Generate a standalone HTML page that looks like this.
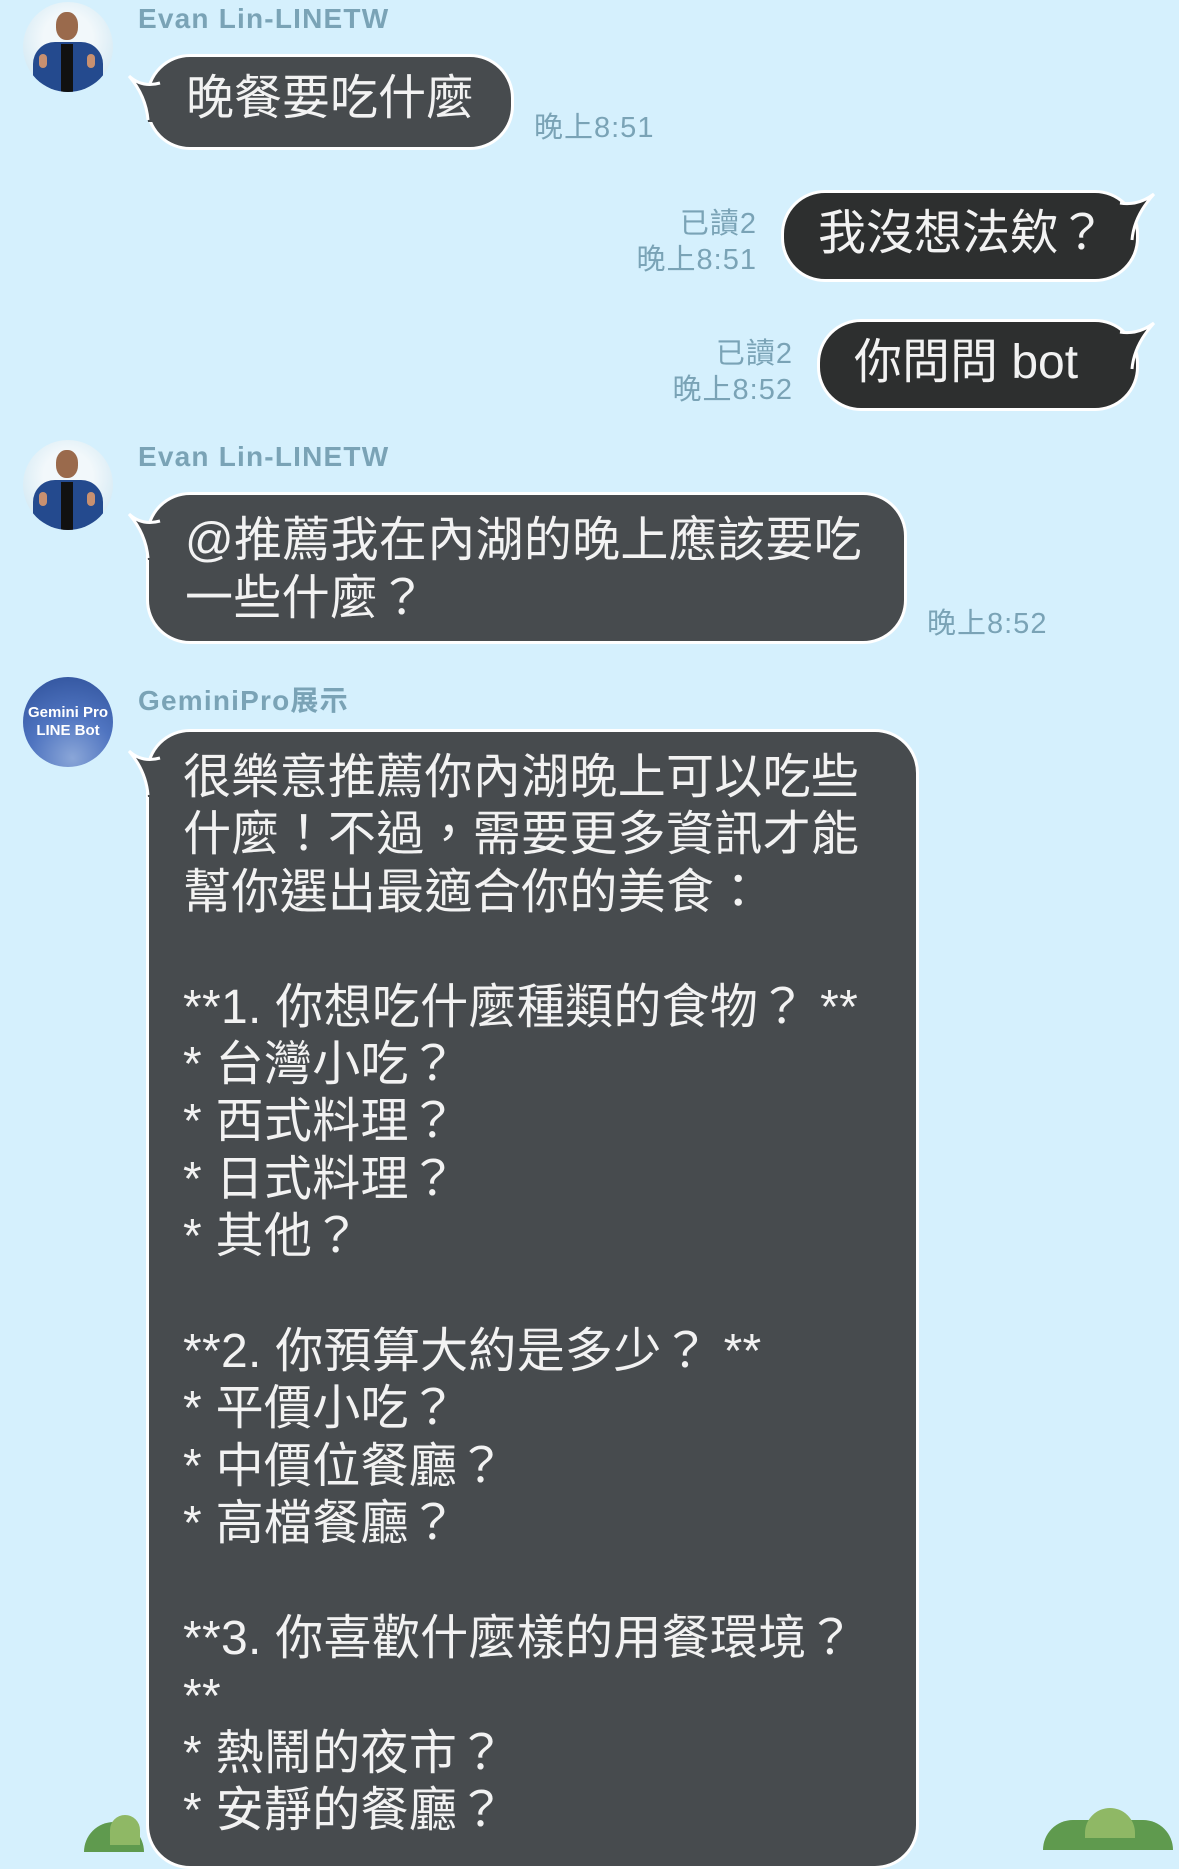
<!DOCTYPE html>
<html><head><meta charset="utf-8"><style>
*{margin:0;padding:0;box-sizing:border-box}
body{width:1179px;height:1837px;background:#d5f0fd;position:relative;overflow:hidden;font-family:"Liberation Sans","Noto Sans CJK TC",sans-serif}
.av{position:absolute;width:90px;height:90px;border-radius:50%;left:23px}
.name{position:absolute;left:138px;font-size:28px;color:#7aa3b6;font-weight:bold;letter-spacing:1.2px}
.b{position:absolute;border:3px solid #fff;color:#f2f2f2;font-size:48px;line-height:58px}
.bl{background:#474b4e}
.br{background:#2d2f2f}
.t{position:absolute;font-size:29px;color:#7aa3b6;line-height:36px;text-align:right;letter-spacing:1px}
.tail{position:absolute;z-index:2}
.msg{white-space:pre;font-size:48px;line-height:57.4px;padding-left:34px;padding-top:17px;letter-spacing:.3px}
</style></head><body>

<div class="av" style="top:2px;background:radial-gradient(circle at 50% 40%,#f2f8fb 0 35%,#d9ecf5 70%);overflow:hidden">
<div style="position:absolute;left:33px;top:10px;width:22px;height:28px;border-radius:45%;background:#9a6a4c"></div>
<div style="position:absolute;left:10px;top:40px;width:70px;height:55px;border-radius:22px 22px 0 0;background:#244a8e"></div>
<div style="position:absolute;left:38px;top:42px;width:12px;height:50px;background:#111"></div>
<div style="position:absolute;left:16px;top:52px;width:8px;height:14px;border-radius:4px;background:#c89070"></div>
<div style="position:absolute;left:64px;top:52px;width:8px;height:14px;border-radius:4px;background:#c89070"></div>
</div>
<div class="name" style="top:3px">Evan Lin-LINETW</div>
<svg class="tail" style="left:122px;top:66px" width="44" height="60"><path d="M7 10 Q20 22 40 16 L40 56 L26 56 Q24 30 7 10Z" fill="#474b4e"/><path d="M7 10 Q20 22 38 17 M7 10 Q24 30 26 54" fill="none" stroke="#fff" stroke-width="3"/></svg>
<div class="b bl" style="left:146px;top:54px;width:368px;height:96px;border-radius:44px;padding:13px 0 0 37px">晚餐要吃什麼</div>
<div class="t" style="left:534px;top:110px;text-align:left">晚上8:51</div>

<div class="t" style="right:422px;top:206px">已讀2<br>晚上8:51</div>
<svg class="tail" style="left:1114px;top:186px" width="44" height="60"><path d="M40 8 Q24 20 4 16 L4 56 L18 56 Q20 30 40 8Z" fill="#2d2f2f"/><path d="M40 8 Q24 20 6 17 M40 8 Q20 30 18 54" fill="none" stroke="#fff" stroke-width="3"/></svg>
<div class="b br" style="left:781px;top:190px;width:358px;height:92px;border-radius:44px;padding:12px 0 0 34px">我沒想法欸？</div>

<div class="t" style="right:386px;top:336px">已讀2<br>晚上8:52</div>
<svg class="tail" style="left:1114px;top:315px" width="44" height="60"><path d="M40 8 Q24 20 4 16 L4 56 L18 56 Q20 30 40 8Z" fill="#2d2f2f"/><path d="M40 8 Q24 20 6 17 M40 8 Q20 30 18 54" fill="none" stroke="#fff" stroke-width="3"/></svg>
<div class="b br" style="left:817px;top:319px;width:322px;height:92px;border-radius:44px;padding:12px 0 0 34px">你問問 bot</div>

<div class="av" style="top:440px;background:radial-gradient(circle at 50% 40%,#f2f8fb 0 35%,#d9ecf5 70%);overflow:hidden">
<div style="position:absolute;left:33px;top:10px;width:22px;height:28px;border-radius:45%;background:#9a6a4c"></div>
<div style="position:absolute;left:10px;top:40px;width:70px;height:55px;border-radius:22px 22px 0 0;background:#244a8e"></div>
<div style="position:absolute;left:38px;top:42px;width:12px;height:50px;background:#111"></div>
<div style="position:absolute;left:16px;top:52px;width:8px;height:14px;border-radius:4px;background:#c89070"></div>
<div style="position:absolute;left:64px;top:52px;width:8px;height:14px;border-radius:4px;background:#c89070"></div>
</div>
<div class="name" style="top:441px">Evan Lin-LINETW</div>
<svg class="tail" style="left:122px;top:504px" width="44" height="60"><path d="M7 10 Q20 22 40 16 L40 56 L26 56 Q24 30 7 10Z" fill="#474b4e"/><path d="M7 10 Q20 22 38 17 M7 10 Q24 30 26 54" fill="none" stroke="#fff" stroke-width="3"/></svg>
<div class="b bl" style="left:146px;top:492px;width:761px;height:152px;border-radius:44px;padding:17px 0 0 36px;letter-spacing:.3px">@推薦我在內湖的晚上應該要吃<br>一些什麼？</div>
<div class="t" style="left:927px;top:606px;text-align:left">晚上8:52</div>

<div class="av" style="top:677px;background:radial-gradient(circle at 55% 90%,#8aa6d8,#4f74c0 45%,#2d4f98);color:#fff;font-weight:bold;font-size:15px;line-height:18px;text-align:center;padding-top:27px">Gemini Pro<br>LINE Bot</div>
<div class="name" style="top:679px">GeminiPro展示</div>
<svg class="tail" style="left:122px;top:741px" width="44" height="60"><path d="M7 10 Q20 22 40 16 L40 56 L26 56 Q24 30 7 10Z" fill="#474b4e"/><path d="M7 10 Q20 22 38 17 M7 10 Q24 30 26 54" fill="none" stroke="#fff" stroke-width="3"/></svg>
<div class="b bl msg" style="left:146px;top:729px;width:773px;height:1140px;border-radius:44px">很樂意推薦你內湖晚上可以吃些
什麼！不過，需要更多資訊才能
幫你選出最適合你的美食：

**1. 你想吃什麼種類的食物？ **
* 台灣小吃？
* 西式料理？
* 日式料理？
* 其他？

**2. 你預算大約是多少？ **
* 平價小吃？
* 中價位餐廳？
* 高檔餐廳？

**3. 你喜歡什麼樣的用餐環境？
**
* 熱鬧的夜市？
* 安靜的餐廳？</div>

<div style="position:absolute;left:84px;top:1822px;width:60px;height:30px;border-radius:30px 30px 0 0;background:#5f9a4e"></div>
<div style="position:absolute;left:110px;top:1815px;width:30px;height:30px;border-radius:15px 15px 0 0;background:#8fb865"></div>
<div style="position:absolute;left:1043px;top:1820px;width:130px;height:30px;border-radius:40px 40px 0 0;background:#5f9a4e"></div>
<div style="position:absolute;left:1085px;top:1808px;width:50px;height:30px;border-radius:25px 25px 0 0;background:#8fb865"></div>
</body></html>
